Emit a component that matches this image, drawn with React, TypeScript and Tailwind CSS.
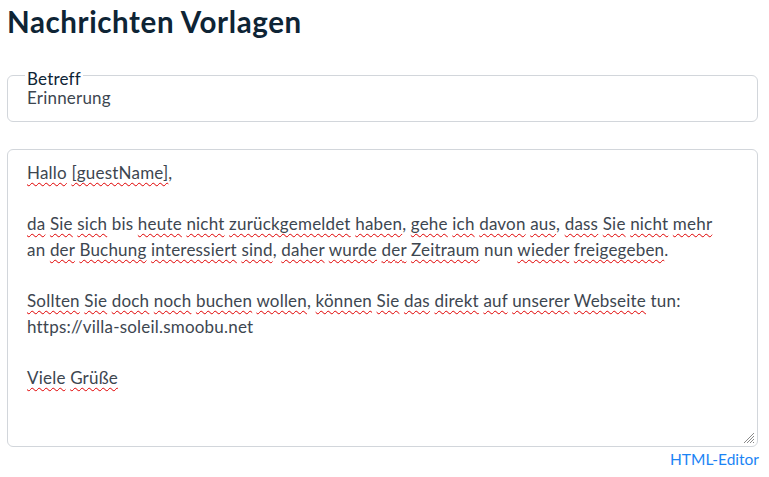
import React from 'react'

const font = { fontFamily: 'Lato, "Open Sans", Arial, sans-serif' }

// words the spellchecker flags get a wavy red underline
const W = ({ children }: { children: React.ReactNode }) => (
  <span className="underline decoration-wavy decoration-[#e00000] decoration-1 underline-offset-[3px]">
    {children}
  </span>
)

export default function App() {
  return (
    <div className="min-h-[477px] w-[769px] bg-white px-[7px] pt-[4px] text-[#3d4650]" style={font}>
      <h1 className="text-[29.5px] font-bold leading-[36px] tracking-[0.6px] text-[#0e2435]">Nachrichten Vorlagen</h1>

      <div className="relative mt-[35px] h-[47px] w-[751px] rounded-[6px] border border-[#d2d6db] px-[19px] pt-[14px]">
        <span className="absolute left-[17px] top-[-4px] bg-white px-[2px] text-[17px] leading-[13px] tracking-[0.2px] text-[#0e2435]">
          Betreff
        </span>
        <div className="text-[17px] leading-[16px] tracking-[0.2px]">Erinnerung</div>
      </div>

      <div className="relative mt-[27px] h-[298px] w-[751px] rounded-[6px] border border-[#d2d6db] px-[19px] pt-[10px] text-[17px] leading-[25.6px] tracking-[0.2px]">
        <p><W>Hallo</W> <W>[guestName]</W>,</p>
        <p>&nbsp;</p>
        <p>
          <W>da</W> <W>Sie</W> <W>sich</W> bis <W>heute</W> <W>nicht</W> <W>zurückgemeldet</W> <W>haben</W>, <W>gehe</W>{' '}
          <W>ich</W> <W>davon</W> <W>aus</W>, <W>dass</W> <W>Sie</W> <W>nicht</W> <W>mehr</W>
          <br />
          an <W>der</W> <W>Buchung</W> <W>interessiert</W> <W>sind</W>, <W>daher</W> <W>wurde</W> <W>der</W>{' '}
          <W>Zeitraum</W> nun <W>wieder</W> <W>freigegeben</W>.
        </p>
        <p>&nbsp;</p>
        <p>
          <W>Sollten</W> <W>Sie</W> <W>doch</W> <W>noch</W> <W>buchen</W> <W>wollen</W>, <W>können</W> <W>Sie</W>{' '}
          <W>das</W> <W>direkt</W> <W>auf</W> <W>unserer</W> <W>Webseite</W> tun:
          <br />
          https://villa-soleil.smoobu.net
        </p>
        <p>&nbsp;</p>
        <p><W>Viele</W> <W>Grüße</W></p>

        <svg className="absolute bottom-[2px] right-[2px]" width="12" height="12" viewBox="0 0 12 12">
          <g stroke="#8a8a8a" strokeWidth="1">
            <line x1="11" y1="1" x2="1" y2="11" />
            <line x1="11" y1="4" x2="4" y2="11" />
            <line x1="11" y1="7" x2="7" y2="11" />
            <line x1="11" y1="10" x2="10" y2="11" />
          </g>
        </svg>
      </div>

      <div className="mt-[3px] flex justify-end pr-[3px]">
        <span className="text-[15.5px] leading-[18px] text-[#1b84f5]">HTML-Editor</span>
      </div>
    </div>
  )
}
